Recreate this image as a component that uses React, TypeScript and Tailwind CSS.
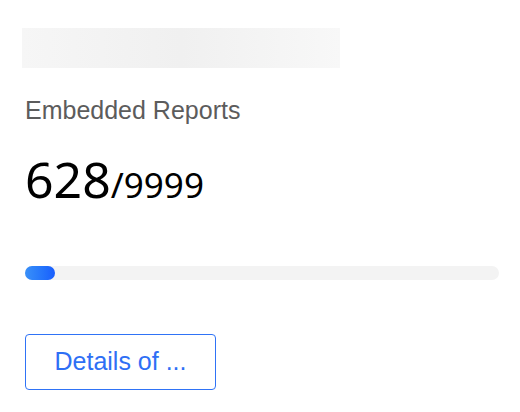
export default function App() {
  return (
    <div className="w-[520px] h-[412px] bg-white overflow-hidden">
      <div className="pt-[28px] pl-[22px]">
        <div className="w-[318px] h-[40px] bg-gradient-to-r from-[#f6f6f6] via-[#f0f0f0] to-[#f8f8f8]" />
      </div>
      <div className="pl-[25px] pr-[21px]">
        <div className="mt-[25px] text-[25px] leading-[34px] text-[#5c5c5c] font-['Liberation_Sans',Arial,sans-serif]">
          Embedded Reports
        </div>
        <div className="mt-[27px] flex items-baseline text-black font-['Noto_Sans',sans-serif] leading-none">
          <span className="text-[50px]">628</span>
          <span className="text-[35px]">/9999</span>
        </div>
        <div className="mt-[62px] h-[14px] rounded-full bg-[#f3f3f3]">
          <div className="h-full w-[30px] rounded-full bg-gradient-to-r from-[#3a90f8] to-[#1a5dfd]" />
        </div>
        <button className="mt-[54px] w-[191px] h-[56px] rounded-[4px] border border-[#2f73f6] text-[#2e6ff5] text-[25px] font-['Liberation_Sans',Arial,sans-serif]">
          Details of ...
        </button>
      </div>
    </div>
  );
}
